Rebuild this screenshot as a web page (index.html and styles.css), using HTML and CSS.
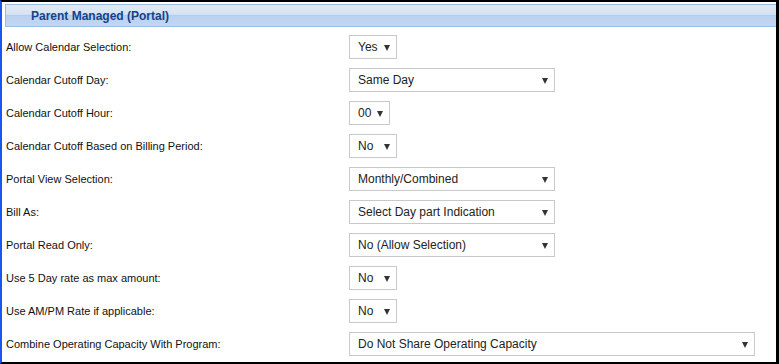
FILE: index.html
```html
<!DOCTYPE html>
<html>
<head>
<meta charset="utf-8">
<link rel="stylesheet" href="styles.css">
</head>
<body>
<div class="frame">
  <div class="panel-header"><span class="panel-title">Parent Managed (Portal)</span></div>
  <div class="form">
    <div class="row"><div class="label">Allow Calendar Selection:</div><div class="sel sel-s"><span>Yes</span><i class="arrow"></i></div></div>
    <div class="row"><div class="label">Calendar Cutoff Day:</div><div class="sel sel-m"><span>Same Day</span><i class="arrow"></i></div></div>
    <div class="row"><div class="label">Calendar Cutoff Hour:</div><div class="sel sel-xs"><span>00</span><i class="arrow"></i></div></div>
    <div class="row"><div class="label">Calendar Cutoff Based on Billing Period:</div><div class="sel sel-s"><span>No</span><i class="arrow"></i></div></div>
    <div class="row"><div class="label">Portal View Selection:</div><div class="sel sel-m"><span>Monthly/Combined</span><i class="arrow"></i></div></div>
    <div class="row"><div class="label">Bill As:</div><div class="sel sel-m"><span>Select Day part Indication</span><i class="arrow"></i></div></div>
    <div class="row"><div class="label">Portal Read Only:</div><div class="sel sel-m"><span>No (Allow Selection)</span><i class="arrow"></i></div></div>
    <div class="row"><div class="label">Use 5 Day rate as max amount:</div><div class="sel sel-s"><span>No</span><i class="arrow"></i></div></div>
    <div class="row"><div class="label">Use AM/PM Rate if applicable:</div><div class="sel sel-s"><span>No</span><i class="arrow"></i></div></div>
    <div class="row"><div class="label">Combine Operating Capacity With Program:</div><div class="sel sel-l"><span>Do Not Share Operating Capacity</span><i class="arrow"></i></div></div>
  </div>
</div>
</body>
</html>
```

FILE: styles.css
```css
* { box-sizing: border-box; }
html, body { margin: 0; padding: 0; background: #fff; }
body { font-family: "Liberation Sans", Arial, sans-serif; }

.frame {
  width: 779px;
  height: 364px;
  border-top: 2px solid #000;
  border-right: 3px solid #000;
  border-bottom: 2px solid #000;
  border-left: 2px solid #1a55f0;
  padding-top: 2px;
  overflow: hidden;
}

.panel-header {
  margin-left: 3px;
  height: 23px;
  border: 1px solid #99bbe8;
  border-right: none;
  background: linear-gradient(#e1eaf6 0, #d6e3f3 45%, #a9c6ee 47%, #b9d0f0 52%, #c4d7f0 100%);
  display: flex;
  align-items: center;
  padding-left: 25px;
}

.panel-title {
  font-weight: bold;
  font-size: 12px;
  color: #15428b;
  padding-top: 1px;
}

.form {
  padding: 8px 0 0 4px;
  display: flex;
  flex-direction: column;
  gap: 9px;
}

.row {
  display: flex;
  align-items: center;
  height: 24px;
}

.label {
  width: 343px;
  font-size: 11px;
  color: #111;
  margin-top: -1px;
}

.sel {
  height: 24px;
  border: 1px solid #c9c9c9;
  display: flex;
  align-items: center;
  justify-content: space-between;
  padding: 0 6px 0 8px;
  font-size: 12px;
  color: #222;
  background: #fff;
}

.sel-xs { width: 41px; }
.sel-s { width: 48px; }
.sel-m { width: 206px; }
.sel-l { width: 406px; }

.arrow {
  width: 0;
  height: 0;
  border-left: 3px solid transparent;
  border-right: 3px solid transparent;
  border-top: 6px solid #333;
  margin-top: 1px;
}
```
